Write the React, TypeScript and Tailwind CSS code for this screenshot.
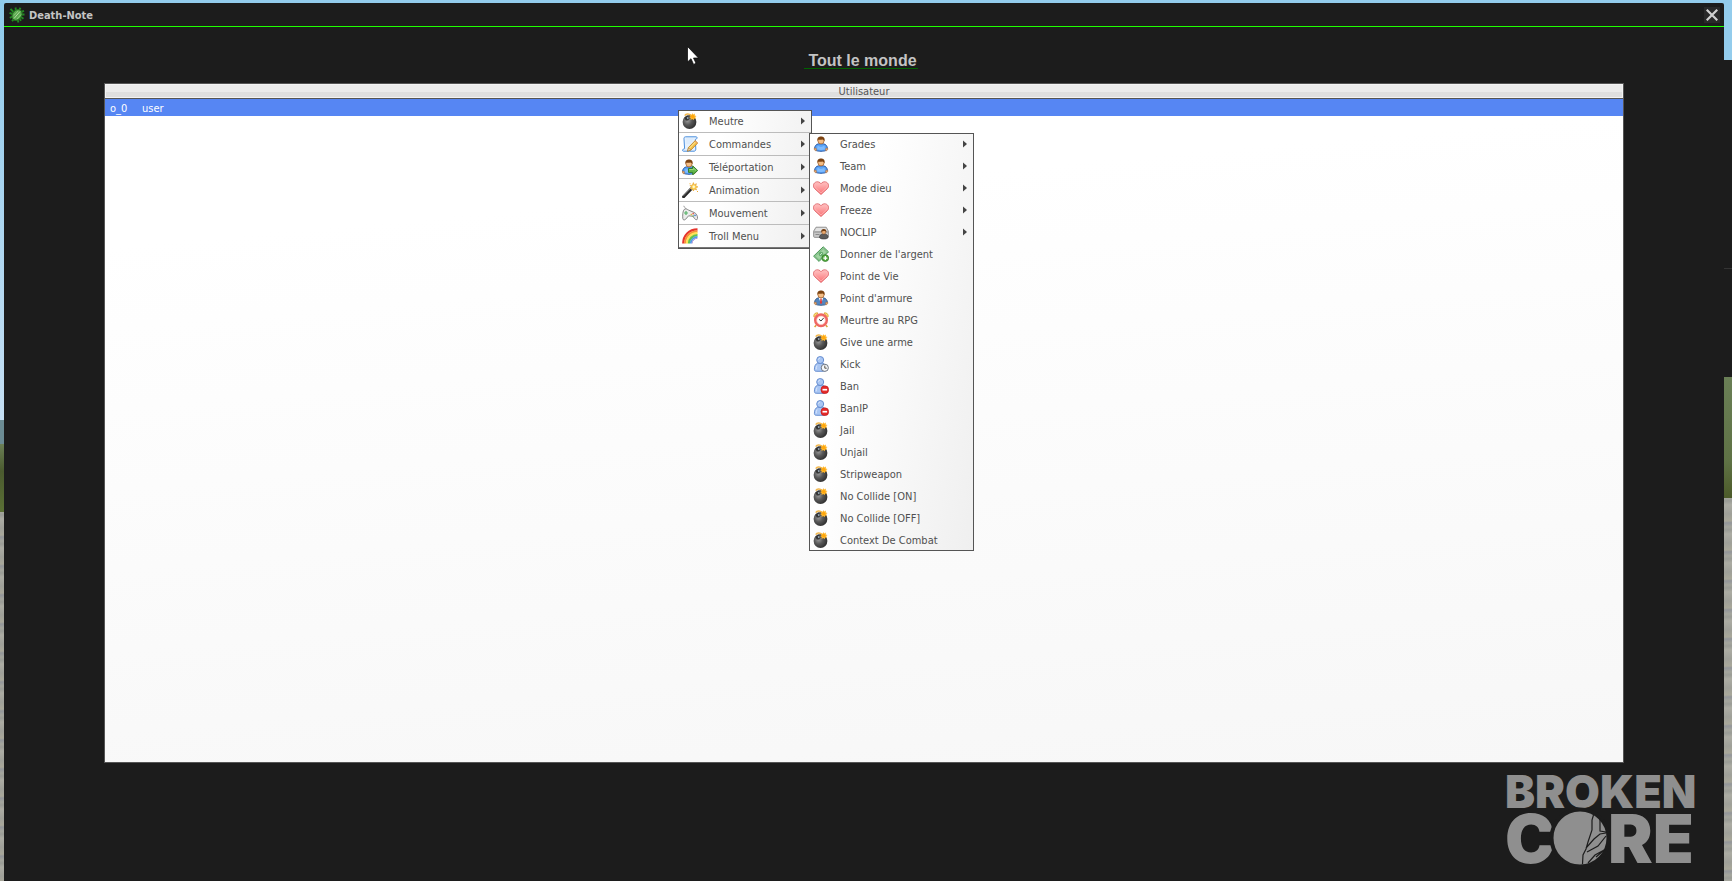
import { useId, useState, type ReactNode } from "react";
import clsx from "clsx";

type IconName =
  | "bomb"
  | "scriptEdit"
  | "userGo"
  | "wand"
  | "controller"
  | "rainbow"
  | "user"
  | "heart"
  | "driveUser"
  | "moneyAdd"
  | "userSuit"
  | "clockRed"
  | "userAway"
  | "userBusy";

interface MenuEntry {
  label: string;
  icon: IconName;
  submenu?: boolean;
}

interface Player {
  tag: string;
  rank: string;
}

const PLAYERS: Player[] = [{ tag: "o_0", rank: "user" }];

const MAIN_MENU: MenuEntry[] = [
  { label: "Meutre", icon: "bomb", submenu: true },
  { label: "Commandes", icon: "scriptEdit", submenu: true },
  { label: "Téléportation", icon: "userGo", submenu: true },
  { label: "Animation", icon: "wand", submenu: true },
  { label: "Mouvement", icon: "controller", submenu: true },
  { label: "Troll Menu", icon: "rainbow", submenu: true },
];

const COMMANDS_MENU: MenuEntry[] = [
  { label: "Grades", icon: "user", submenu: true },
  { label: "Team", icon: "user", submenu: true },
  { label: "Mode dieu", icon: "heart", submenu: true },
  { label: "Freeze", icon: "heart", submenu: true },
  { label: "NOCLIP", icon: "driveUser", submenu: true },
  { label: "Donner de l'argent", icon: "moneyAdd" },
  { label: "Point de Vie", icon: "heart" },
  { label: "Point d'armure", icon: "userSuit" },
  { label: "Meurtre au RPG", icon: "clockRed" },
  { label: "Give une arme", icon: "bomb" },
  { label: "Kick", icon: "userAway" },
  { label: "Ban", icon: "userBusy" },
  { label: "BanIP", icon: "userBusy" },
  { label: "Jail", icon: "bomb" },
  { label: "Unjail", icon: "bomb" },
  { label: "Stripweapon", icon: "bomb" },
  { label: "No Collide [ON]", icon: "bomb" },
  { label: "No Collide [OFF]", icon: "bomb" },
  { label: "Context De Combat", icon: "bomb" },
];

function Head() {
  return (
    <>
      <circle cx="8" cy="4.8" r="3.1" fill="#f3bd85" stroke="#a9642c" strokeWidth="0.8" />
      <path d="M4.4 5C4 1.8 5.8.6 8 .6s4.1 1.2 3.6 4.4C10.8 4.2 10 3.4 9.4 3.4c-1.4.7-3.4.5-4 .1-.4.4-.7 1-1 1.5z" fill="#7c4312" />
    </>
  );
}

function Person({ suit = false }: { suit?: boolean }) {
  return (
    <>
      <path
        d="M1.6 12.6c0-2.6 1.6-4.4 4-4.8h4.8c2.4.4 4 2.2 4 4.8 0 1.7-2.4 2.7-6.4 2.7s-6.4-1-6.4-2.7z"
        fill={suit ? "#5485be" : "#5ba3f5"}
        stroke={suit ? "#345b8b" : "#1e4f9e"}
        strokeWidth="0.9"
      />
      {suit ? (
        <>
          <path d="M5.8 8h4.4L8 13.5z" fill="#fff" />
          <path d="M7.4 8.6h1.2l.5 4.2L8 14.3l-1.1-1.5z" fill="#d8383b" />
        </>
      ) : (
        <path d="M4.6 9.8c2 1.5 4.8 1.5 6.8 0l.6 3.4c-2.4 1-5.6 1-8 0z" fill="#7fbcff" />
      )}
      <path d="M1.2 12.2l2 .1.4 2-1.2.4c-.9-.4-1.4-1.2-1.2-2.5zM14.8 12.2l-2 .1-.4 2 1.2.4c.9-.4 1.4-1.2 1.2-2.5z" fill="#e9a56a" stroke="#a9642c" strokeWidth="0.4" />
      <Head />
    </>
  );
}

function BluePawn() {
  return (
    <g fill="#a9c6f3" stroke="#5c86cc" strokeWidth="0.9">
      <path d="M1.4 13.4c0-3 .9-5.5 3.2-6.2h5.2c2.3.7 3.2 3.2 3.2 6.2 0 1.2-.7 1.9-1.8 1.9H3.2c-1.1 0-1.8-.7-1.8-1.9z" />
      <circle cx="7.2" cy="4" r="3.5" />
      <path d="M4 9.6c-.6 1.2-.8 2.4-.8 3.8" fill="none" stroke="#dfeaff" />
      <path d="M5.4 3.6c.2-1 .8-1.4 1.6-1.5" fill="none" stroke="#e8f0ff" />
    </g>
  );
}

function Icon({ name }: { name: IconName }) {
  const id = useId();
  const fill = `url(#${id})`;
  const art: Record<IconName, ReactNode> = {
    bomb: (
      <>
        <radialGradient id={id} cx="0.36" cy="0.4" r="0.7">
          <stop offset="0" stopColor="#9a9a9a" />
          <stop offset="0.45" stopColor="#585858" />
          <stop offset="1" stopColor="#2b2b2b" />
        </radialGradient>
        <circle cx="7.5" cy="9" r="6.9" fill={fill} />
        <path d="M2.4 4.8l2.8-2.2 2.6 2.2-1.6 2.6-2.4.2z" fill="#343434" />
        <path d="M4.6 4.8l1.4-.8.8 1-1 1.2z" fill="#a9bccb" />
        <path d="M2.8 2.6C4 .6 7 .4 9 2.4" fill="none" stroke="#f1b64c" strokeWidth="1.7" />
        <path d="M10.4 0l.8 1.4L13 .6l-.3 1.8 1.9.6-1.4 1.1.9 1.8-1.9-.3-.6 1.6-1.3-1.1-1.8.9.2-1.9-1.6-.9 1.5-.9-.4-1.7 1.6.2z" fill="#ffb62a" />
        <circle cx="10.7" cy="3.5" r="1.6" fill="#ffa60a" />
      </>
    ),
    scriptEdit: (
      <>
        <path d="M3.5.8h10.7c1 0 1.2 1.4.4 2l-1.2.6.4 9.6c0 1.4-.6 2.2-1.8 2.2H1.4c-1 0-1.2-1.4-.2-2l1.4-.5L2 3.2C1.8 1.8 2.4.8 3.5.8z" fill="#e6f1fd" stroke="#4b8fdd" />
        <path d="M4.2 3h7.2M4.2 5h6M4.2 7h4.6" stroke="#d3e6fb" />
        <path d="M13.2 4.6l2.5 2.5-6.7 6.900-3.600 1.200 1-3.600z" fill="#f5c049" stroke="#ae7114" strokeWidth="0.7" />
        <path d="M13.7 5.7L7.6 12" stroke="#fff0a8" strokeWidth="0.9" />
        <path d="M6.6 11.9l2.2 2.2-3.2 1z" fill="#f7ddb3" stroke="#8c6a3c" strokeWidth="0.4" />
        <path d="M12.600 5.300l2.400 2.400.8-.8-2.300-2.400z" fill="#e9a060" />
      </>
    ),
    userGo: (
      <>
        <g transform="translate(-1 0)">
          <Person />
        </g>
        <path d="M6.5 9.5h4.2V6.8l5 4.7-5 4.4v-2.5H6.5z" fill="#62b64b" stroke="#2b7624" strokeWidth="0.9" />
        <path d="M7.3 10.5h4.3V9.2l2.4 2.3" fill="none" stroke="#a8e08e" strokeWidth="0.8" />
      </>
    ),
    wand: (
      <>
        <path d="M1.6 14.8L10 6" stroke="#272727" strokeWidth="3" strokeLinecap="round" />
        <path d="M1.2 14.2L9 6" stroke="#8e8e8e" strokeWidth="0.8" />
        <path d="M8.6 5.4l2 2" stroke="#dcdcdc" strokeWidth="1.5" />
        <path d="M11.4.6l.8 2.3 2.2-1.2-.7 2.3 2.2.9-2.2.8.9 2.2-2.3-.9-.9 2-1-2.2-2 .1L9.6 5 8 3.4l2.3-.1z" fill="#ffd65a" stroke="#e49b1d" strokeWidth="0.6" />
        <circle cx="11.8" cy="4.7" r="1.2" fill="#fffbd0" />
        <path d="M7.5 1.2h1v1h-1zM15 9h1v1h-1z" fill="#f3ad32" />
      </>
    ),
    controller: (
      <>
        <path d="M1.8.8c0 2 2.2 1.4 2.2 3.5" fill="none" stroke="#9c9c9c" />
        <path d="M2.5 4.2C4 3.4 5 4.2 6.4 5L12 7.4c2.4.8 3.7 3.8 3.7 6.4-.7 1.4-2.1 1-3-.1l-1.8-2.4-4.3-.5-2.900 3.400c-1 1.200-2.700 1-2.900-.6C.5 11 .6 5.400 2.500 4.200z" fill="#ececec" stroke="#7c7c7c" strokeWidth="0.9" />
        <path d="M4 6v4M2 8h4" stroke="#54b267" strokeWidth="1.2" />
        <circle cx="11.2" cy="8.6" r="0.9" fill="#e25d55" />
        <circle cx="13" cy="10.3" r="0.9" fill="#4b83d6" />
        <circle cx="9.3" cy="9.6" r="0.8" fill="#e0b83e" />
        <circle cx="11.2" cy="11" r="0.7" fill="#54ab52" />
      </>
    ),
    rainbow: (
      <g fill="none" strokeWidth="2.2">
        <path d="M1.2 15.5C1.2 7.4 7 1.4 15.5 1.4" stroke="#e6342c" />
        <path d="M3.1 15.5C3.1 8.6 8.4 3.3 15.5 3.3" stroke="#f7913a" />
        <path d="M5 15.5C5 9.8 9.6 5.2 15.5 5.2" stroke="#ffe455" />
        <path d="M6.9 15.5C6.9 11 10.8 7.1 15.5 7.1" stroke="#63c24c" />
        <path d="M8.7 15.5C8.7 12 12 8.9 15.5 8.9" stroke="#4f9fe8" strokeWidth="1.8" />
        <path d="M10 15.5C10 12.8 12.6 10.2 15.5 10.2" stroke="#9a7bd3" strokeWidth="0.9" />
      </g>
    ),
    user: <Person />,
    heart: (
      <>
        <linearGradient id={id} x1="0" y1="0" x2="0" y2="1">
          <stop offset="0" stopColor="#ffc4c4" />
          <stop offset="1" stopColor="#fa6e72" />
        </linearGradient>
        <path d="M8 14.5L1.6 8.6C-.5 6.4.3 2.5 3.6 1.9 5.4 1.6 7.1 2.4 8 3.7c.9-1.3 2.6-2.1 4.4-1.8 3.3.6 4.1 4.5 2 6.7z" fill={fill} stroke="#dc6266" strokeWidth="0.9" />
        <path d="M8 13L2.6 8C1.2 6.4 1.6 3.5 4 3c1.6-.2 3.1.6 4 2 .9-1.4 2.4-2.2 4-2 2.4.5 2.8 3.4 1.4 5z" fill="none" stroke="#ffb4b4" strokeWidth="0.8" />
      </>
    ),
    driveUser: (
      <>
        <path d="M3 3.2h10.2l2.2 4v5c0 .8-.4 1.2-1.2 1.2H1.8c-.8 0-1.2-.4-1.2-1.2v-5z" fill="#c7c7c7" stroke="#8f8f8f" strokeWidth="0.9" />
        <path d="M3.4 3.9h9.4l1.5 3.1H1.8z" fill="#e2e2e2" />
        <path d="M1.2 8h13.6M2.5 10.5h4" stroke="#8b8b8b" />
        <path d="M6.5 13.2c0-1.6 1-2.7 2.5-3h3.5c1.5.3 2.6 1.4 2.6 3 0 1.1-1.5 1.8-4.3 1.8s-4.3-.7-4.3-1.8z" fill="#5c5c5c" stroke="#333" strokeWidth="0.6" />
        <circle cx="10.8" cy="8" r="2.1" fill="#eaa96e" stroke="#8e501f" strokeWidth="0.5" />
        <path d="M8.2 8C8 6 9 4.9 10.8 4.9S13.6 6 13.3 8c-.8-1.2-3.5-1.5-5.1 0z" fill="#744014" />
      </>
    ),
    moneyAdd: (
      <>
        <path d="M.6 10.2L10.2.8l5.3 5-9.4 9.6z" fill="#a1d4a2" stroke="#459453" />
        <path d="M2.3 10.2l7.8-7.7 3.7 3.5-7.7 7.8z" fill="none" stroke="#6cae72" strokeWidth="0.7" />
        <circle cx="8" cy="8.1" r="2.3" fill="#65ae6e" />
        <path d="M7.1 8.9l1.8-1.8" stroke="#dff5dd" strokeWidth="0.9" />
        <circle cx="12.3" cy="12.1" r="3.4" fill="#54ad42" stroke="#2e7423" strokeWidth="0.7" />
        <path d="M12.3 10.1v4M10.3 12.1h4" stroke="#fff" strokeWidth="1.3" />
      </>
    ),
    userSuit: <Person suit />,
    clockRed: (
      <>
        <path d="M.8 4.7C.5 2 2.5.3 5 1L1.6 5.1zM15.2 4.7c.3-2.7-1.7-4.4-4.2-3.7l3.4 4.1z" fill="#ffe07b" stroke="#d59a2c" strokeWidth="0.8" />
        <path d="M3.2 13.2l-1.6 1.9M12.8 13.2l1.6 1.9" stroke="#d9a038" strokeWidth="1.5" />
        <circle cx="8" cy="8.3" r="5.7" fill="#fff" stroke="#ef6662" strokeWidth="2.6" />
        <circle cx="8" cy="8.3" r="4.3" fill="none" stroke="#ffb7b2" strokeWidth="0.6" />
        <path d="M6 7.3l2 1.7 2.6-3" fill="none" stroke="#333" strokeWidth="1" />
      </>
    ),
    userAway: (
      <>
        <BluePawn />
        <circle cx="11.8" cy="11.8" r="3.6" fill="#f4f7fb" stroke="#6f7782" strokeWidth="1" />
        <path d="M11.8 9.6v2.6h1.9" fill="none" stroke="#4a4232" strokeWidth="0.9" />
      </>
    ),
    userBusy: (
      <>
        <BluePawn />
        <circle cx="11.8" cy="11.7" r="3.9" fill="#e52a2a" stroke="#b91717" strokeWidth="0.6" />
        <path d="M9.5 11.7h4.6" stroke="#fff" strokeWidth="1.7" />
      </>
    ),
  };

  return (
    <svg viewBox="0 0 16 16" className="size-4 shrink-0" aria-hidden="true">
      {art[name]}
    </svg>
  );
}

interface MenuProps {
  label: string;
  entries: MenuEntry[];
  divided?: boolean;
  className?: string;
}

function Menu({ label, entries, divided = false, className }: MenuProps) {
  return (
    <div
      role="menu"
      aria-label={label}
      className={clsx(
        "absolute flex flex-col bg-linear-100 from-white from-30% to-[#efefef] inset-ring inset-ring-[#555]",
        divided && "pb-px",
        className,
      )}
    >
      {entries.map((entry) => (
        <button
          key={entry.label}
          type="button"
          role="menuitem"
          aria-haspopup={entry.submenu ? "menu" : undefined}
          className={clsx(
            "mx-px flex items-center gap-[11px] pr-1.5 pl-[3px] text-left text-[#505050] hover:bg-blue-100",
            divided ? "h-[23px] border-b border-[#bcbcbc] last:border-[#777]" : "h-[22px]",
          )}
        >
          <Icon name={entry.icon} />
          <span className="grow pt-0.5 whitespace-nowrap">{entry.label}</span>
          {entry.submenu && (
            <svg viewBox="0 0 4 8" className="h-2 w-1 shrink-0" aria-hidden="true">
              <path d="M0 .5v7L4 4z" fill="#444" />
            </svg>
          )}
        </button>
      ))}
    </div>
  );
}

function BugIcon() {
  return (
    <svg viewBox="0 0 16 16" className="size-4" aria-hidden="true">
      <path
        d="M4.5 5L1.5 1.8M7 4L6.5.5M10 3.5L11.5.8M12 5l3-1.2M12.5 7.5h3M12 10l2.5 1.8M3.5 7L.5 5.8M3.5 9.5L.8 10.8M5 12l-2 2.2M8.5 12.5l1 3M10.5 11.5l1.5 2.3"
        stroke="#238a23"
        strokeWidth="1.9"
      />
      <ellipse cx="8" cy="8" rx="4.6" ry="5.8" transform="rotate(38 8 8)" fill="#5aa94f" stroke="#24701f" />
      <path d="M11 4.5L5 11.5" stroke="#b5d9a2" strokeWidth="1" />
      <path d="M9 4L5 8.5M12 7.5l-4 4.5" stroke="#8fca80" strokeWidth="1" />
    </svg>
  );
}

function BrokenCoreLogo() {
  return (
    <svg
      viewBox="0 0 194 94"
      className="h-[94px] w-[194px] overflow-visible"
      fill="#8f8f8f"
      fontFamily="Inter, sans-serif"
      fontWeight="900"
      role="img"
      aria-label="Broken Core"
    >
      <text x="-2" y="35" fontSize="45">
        BROKEN
      </text>
      <text x="-2" y="90" fontSize="67">
        C
      </text>
      <circle cx="73" cy="65" r="28.5" fill="#8f8f8f" stroke="#1c1c1c" strokeWidth="4" />
      <path
        d="M86.500 42l-1.500 5v10l-4 12-2 7-3 6-.500 9M79 75l8-9 6-5 6-1M93 45v13l6 1M80 79l11-6 8-10M81 90l7-8 11-6M89 84l7-6"
        fill="none"
        stroke="#1c1c1c"
        strokeWidth="1.2"
      />
      <text x="101" y="90" fontSize="67">
        RE
      </text>
    </svg>
  );
}

// Strips of the game world that stay visible around the window
function WorldBackdrop({ side }: { side: "left" | "right" }) {
  return (
    <div className={clsx("flex shrink-0 flex-col self-stretch", side === "left" ? "w-1" : "w-2")}>
      {side === "left" ? (
        <>
          <div className="h-[420px] bg-linear-to-b from-[#8fcbec] to-[#c5dff3]" />
          <div className="h-6 bg-[#6b8b93]" />
          <div className="h-[68px] bg-linear-to-b from-[#6b7f55] via-[#4b5b2f] via-40% to-[#5b7035]" />
        </>
      ) : (
        <>
          <div className="h-[60px] bg-[#93ccec]" />
          <div className="h-[209px] border-b border-[#343434] bg-[#1c1c1c]" />
          <div className="h-[108px] bg-[#1c1c1c]" />
          <div className="h-[121px] bg-linear-to-b from-[#6a7f56] via-[#5f7245] via-70% to-[#4c5a29]" />
        </>
      )}
      <div className="grow bg-[repeating-linear-gradient(178deg,#a5a69d_0px,#9a9c96_3px,#acaca3_7px,#9fa099_16px,#a9a89a_23px,#93969a_25px,#a5a69d_29px)]" />
    </div>
  );
}

export default function App() {
  const [selected, setSelected] = useState(PLAYERS[0].tag);

  return (
    <div className="flex min-h-screen bg-[#93ccec] font-['DejaVu_Sans_Condensed','DejaVu_Sans',sans-serif] text-[11px] leading-4">
      <WorldBackdrop side="left" />

      <main className="relative mt-[3px] flex grow flex-col rounded-t-xs bg-[#1c1c1c]">
        {/* Title bar */}
        <header className="flex h-6 items-center border-b border-[#1fff00] pr-1 pl-[5px]">
          <BugIcon />
          <h1 className="ml-1 grow pt-0.5 font-bold text-[#c4c4c4]">Death-Note</h1>
          <button
            type="button"
            aria-label="Fermer"
            className="flex size-4 items-center justify-center bg-[#292929]"
          >
            <svg viewBox="0 0 12 12" className="size-3" aria-hidden="true">
              <path d="M1.5 1.5l9 9M10.5 1.5l-9 9" stroke="#d0d0d0" strokeWidth="2.2" strokeLinecap="square" />
            </svg>
          </button>
        </header>

        <div className="flex justify-center pt-6 pr-1.5">
          <h2 className="border-b border-[#006400] pt-0.5 pr-px pl-1 font-['Liberation_Sans',Arial,sans-serif] text-base leading-[15px] font-bold text-[#c4c4c4]">
            Tout le monde
          </h2>
        </div>

        {/* Player list */}
        <section className="mx-[100px] mt-3.5 grow border border-[#555] bg-linear-175 from-white from-20% to-[#f7f7f7]">
          <table className="w-full border-separate border-spacing-0">
            <thead>
              <tr className="bg-linear-to-b from-[#ebebeb] from-50% to-[#dfdfdf] to-50%">
                <th colSpan={2} className="border-b border-[#555] px-0 pt-0.5 pb-0 leading-3 font-normal text-[#555] inset-ring inset-ring-[#f3f3f3]">
                  Utilisateur
                </th>
              </tr>
            </thead>
            <tbody>
              {PLAYERS.map((player) => (
                <tr
                  key={player.tag}
                  onClick={() => setSelected(player.tag)}
                  className={clsx(
                    "leading-[15px]",
                    selected === player.tag ? "bg-[#5686f3] text-white" : "text-[#505050]",
                  )}
                >
                  <td className="w-[37px] pt-0.5 pr-0 pb-0 pl-[5px]">{player.tag}</td>
                  <td className="px-0 pt-0.5 pb-0">{player.rank}</td>
                </tr>
              ))}
            </tbody>
          </table>
        </section>

        <footer className="flex h-[118px] justify-end pt-2.5 pr-[23px]">
          <BrokenCoreLogo />
        </footer>

        <Menu
          label="Actions"
          entries={MAIN_MENU}
          divided
          className="top-[107px] left-[674px] w-[134px]"
        />
        <Menu
          label="Commandes"
          entries={COMMANDS_MENU}
          className="top-[130px] left-[805px] w-[165px]"
        />

        <svg viewBox="0 0 12 19" className="absolute top-[43px] left-[683px] h-[19px] w-3" aria-hidden="true">
          <path d="M.5.5v15.500l3.500-3.300 2.600 5.700 2.400-1.100-2.500-5.300h5z" fill="#fff" stroke="#000" strokeWidth="0.7" />
        </svg>
      </main>

      <WorldBackdrop side="right" />
    </div>
  );
}
